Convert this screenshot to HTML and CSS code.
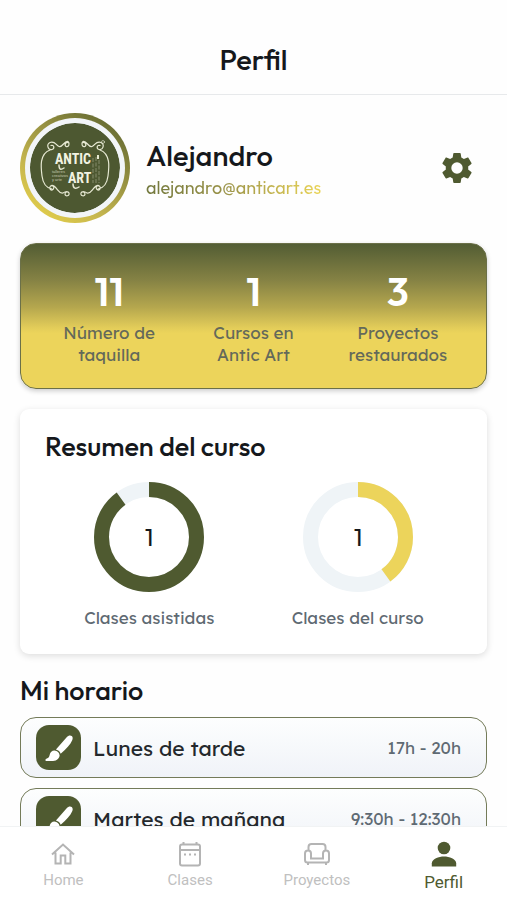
FILE: index.html
```html
<!DOCTYPE html>
<html lang="es">
<head>
<meta charset="utf-8">
<meta name="viewport" content="width=device-width, initial-scale=1">
<title>Perfil</title>
<link rel="stylesheet" href="styles.css">
</head>
<body>
<header class="topbar"><h1>Perfil</h1></header>
<main class="content">
  <section class="profile">
    <div class="avatar">
      <svg class="avatar-logo" viewBox="0 0 90 90" role="img" aria-label="Antic Art">
        <circle cx="45" cy="45" r="45" fill="#4d5831"/>
        <g fill="none" stroke="#e6e8d2" stroke-width="1.2" stroke-linecap="round">
          <path d="M39 20c-3-2-5 2-3 3.500 3 1 4-3 2-5-4-1-5 6-9 5-3-1-4-6-9-4-4 2-2 8 2 7 3-1 2-5-1-4M20 27C9 31 11 45 12 53c1 8 4 12 10 13M22 63c3-1 2 5-1 4-3-2 0-6 3-4 4 3 5 8 9 7 3-2 5-2 6 0 1 3-4 4-4 1 0-2 3-3 4-1"/>
          <path d="M52 20c3-2 5 2 3 3.500-3 1-4-3-2-5 4-1 5 6 9 5 3-1 4-6 9-4 4 2 2 8-2 7-3-1-2-5 1-4M70 27c11 4 9 18 8 26-1 8-4 12-10 13M68 63c-3-1-2 5 1 4 3-2 0-6-3-4-4 3-5 8-9 7-3-2-5-2-6 0-1 3 4 4 4 1 0-2-3-3-4-1"/>
          <circle cx="73" cy="19" r="1.500" stroke-width=".6"/>
          <path d="M29 42c0 5 2 5 5 3M43 61c0 5 3 5 6 3" stroke-width="1.500"/>
        </g>
        <g stroke="#9fa486" stroke-width=".7" fill="none" stroke-dasharray="4 1.500">
          <path d="M63 35v25M66 34v26M69 37v23"/>
        </g>
        <path d="M67 32h2v4h-2z" fill="#e6e8d2"/>
        <g class="logo-name"><text x="25" y="41">ANTIC</text><text x="38" y="60">ART</text></g>
        <g class="logo-note"><text x="22" y="50">talleres</text><text x="22" y="54">creativos</text><text x="22" y="58">y arte</text></g>
      </svg>
    </div>
    <div class="identity">
      <h2 class="name">Alejandro</h2>
      <span class="email">alejandro@anticart.es</span>
    </div>
    <button class="settings" type="button" aria-label="Ajustes">
      <svg viewBox="0 0 24 24"><path d="M19.430 12.980c.04-.32.07-.64.07-.98s-.03-.66-.07-.98l2.110-1.650c.19-.15.24-.42.12-.64l-2-3.460c-.12-.22-.39-.3-.61-.22l-2.490 1c-.52-.4-1.080-.73-1.690-.98l-.38-2.650C14.460 2.180 14.250 2 14 2h-4c-.25 0-.46.18-.49.42l-.38 2.650c-.61.25-1.170.59-1.690.98l-2.490-1c-.23-.09-.49 0-.61.22l-2 3.460c-.13.22-.07.49.12.64l2.110 1.650c-.04.32-.07.65-.07.98s.03.66.07.98l-2.110 1.650c-.19.15-.24.42-.12.64l2 3.460c.12.22.39.3.61.22l2.490-1c.52.4 1.080.73 1.690.98l.38 2.650c.03.24.24.42.49.42h4c.25 0 .46-.18.49-.42l.38-2.650c.61-.25 1.170-.59 1.690-.98l2.490 1c.23.09.49 0 .61-.22l2-3.460c.12-.22.07-.49-.12-.64zM12 15.800a3.800 3.800 0 1 1 0-7.600 3.800 3.800 0 0 1 0 7.600z"/></svg>
    </button>
  </section>

  <section class="stats">
    <div class="stat"><strong>11</strong><span>Número de<br>taquilla</span></div>
    <div class="stat"><strong>1</strong><span>Cursos en<br>Antic Art</span></div>
    <div class="stat"><strong>3</strong><span>Proyectos<br>restaurados</span></div>
  </section>

  <section class="summary">
    <h2>Resumen del curso</h2>
    <div class="charts">
      <figure class="chart">
        <svg viewBox="0 0 110 110">
          <circle class="track" cx="55" cy="55" r="47.500"/>
          <circle class="value attended" cx="55" cy="55" r="47.500" pathLength="100"/>
          <text x="55" y="64">1</text>
        </svg>
        <figcaption>Clases asistidas</figcaption>
      </figure>
      <figure class="chart">
        <svg viewBox="0 0 110 110">
          <circle class="track" cx="55" cy="55" r="47.500"/>
          <circle class="value course" cx="55" cy="55" r="47.500" pathLength="100"/>
          <text x="55" y="64">1</text>
        </svg>
        <figcaption>Clases del curso</figcaption>
      </figure>
    </div>
  </section>

  <section class="schedule">
    <h2>Mi horario</h2>
    <ul>
      <li>
        <span class="badge"><svg viewBox="0 0 44 44"><path d="M19.500 24 30 12c1.500-1.800 3.700-2.200 4.900-1.200s1.200 2.400.5 4.200c-1.600 4.200-5.900 8.600-11.300 13.200-.6-2-2.200-3.600-4.600-4.200zM18 25c3 .4 4.900 2.200 5.100 4.800-.6 4-4 5.600-8.300 5.500H10.500c-1.500 0-1.700-1.900-.4-2.400 2.500-.6 2.900-1.900 3.300-3.800.5-2.400 2.200-4 4.600-4.100z"/></svg></span>
        <span class="day">Lunes de tarde</span><time>17h - 20h</time>
      </li>
      <li>
        <span class="badge"><svg viewBox="0 0 44 44"><path d="M19.500 24 30 12c1.500-1.800 3.700-2.200 4.900-1.200s1.200 2.400.5 4.200c-1.600 4.200-5.900 8.600-11.300 13.200-.6-2-2.200-3.600-4.600-4.200zM18 25c3 .4 4.900 2.200 5.100 4.800-.6 4-4 5.600-8.300 5.500H10.500c-1.500 0-1.700-1.900-.4-2.400 2.500-.6 2.900-1.900 3.300-3.800.5-2.400 2.200-4 4.600-4.100z"/></svg></span>
        <span class="day">Martes de mañana</span><time>9:30h - 12:30h</time>
      </li>
    </ul>
  </section>
</main>
<nav class="tabs">
  <a href="#home"><svg viewBox="0 0 28 28"><path d="M3 14.500 14 4.500l11 10M6.500 12.500v11h5.200v-8h4.600v8h5.200v-11"/></svg><span>Home</span></a>
  <a href="#clases"><svg viewBox="0 0 28 28"><rect x="4" y="4.500" width="20" height="21" rx="2"/><path d="M4 10h20M7.500 2v3M20.500 2v3"/><path d="M8 14.500h2M13 14.500h2M18 14.500h2"/></svg><span>Clases</span></a>
  <a href="#proyectos"><svg viewBox="0 0 28 28"><path d="M5.500 11V7q0-3 3-3h11q3 0 3 3v4M8 18.500h12v-5q0-3 3-3t3 3v6.500q0 2.500-2.500 2.500h-19Q2 22.500 2 20v-6.500q0-3 3-3t3 3zM5 23v2M23 23v2"/></svg><span>Proyectos</span></a>
  <a class="active" href="#perfil" aria-current="page"><svg viewBox="0 0 28 28"><circle cx="14" cy="8" r="6.300"/><path d="M1.800 26.500v-3.300c0-4.200 7-6.700 12.200-6.700s12.200 2.500 12.200 6.700v3.300z"/></svg><span>Perfil</span></a>
</nav>
</body>
</html>
```
FILE: styles.css
```css
:root {
  --olive: #4f5a30;
  --yellow: #ecd45b;
  --ink: #15181c;
  --muted: #5f6a73;
  --display: Outfit, Lato, sans-serif;
  --text: Lexend, "Noto Sans", sans-serif;
}
* { box-sizing: border-box; }
body {
  margin: 0;
  height: 100vh;
  display: flex;
  flex-direction: column;
  background: #fefefe;
  color: var(--ink);
  font-family: var(--text);
}
h1, h2, ul, figure { margin: 0; padding: 0; }
h1, h2 {
  font-family: var(--display);
  font-size: 27px;
  line-height: 32px;
  font-weight: 500;
}
.topbar {
  flex: none;
  padding: 44px 20px 18px;
  border-bottom: 1px solid #e7e9eb;
  text-align: center;
}
.topbar h1 { font-size: 29px; }
.content {
  flex: 1;
  min-height: 0;
  overflow-y: auto;
  scrollbar-width: none;
  padding: 18px 20px;
}
.profile { display: flex; align-items: center; gap: 16px; }
.avatar {
  flex: none;
  width: 110px;
  height: 110px;
  padding: 5px;
  border-radius: 50%;
  background: linear-gradient(35deg, #efd84a 0%, #c3b44e 35%, #6d7135 85%);
}
.avatar-logo {
  display: block;
  width: 100%;
  height: 100%;
  padding: 5px;
  border-radius: 50%;
  background: #f2f5f8;
}
.logo-name { font: bold 14px "Liberation Sans Narrow", "Roboto Condensed", "DejaVu Sans Condensed", sans-serif; fill: #f2f3e2; }
.logo-note { font: 4px "Liberation Sans", sans-serif; fill: #c5c9b0; }
.identity { flex: 1; min-width: 0; padding-top: 4px; }
.name { font-size: 29px; }
.email {
  display: inline-block;
  margin-top: 4px;
  font-family: var(--display);
  font-size: 18px;
  line-height: 24px;
  color: transparent;
  background: linear-gradient(90deg, #72783d, #9a9349 45%, #ead457);
  background-clip: text;
  -webkit-background-clip: text;
}
.settings {
  width: 36px;
  height: 36px;
  margin-right: 12px;
  padding: 0;
  border: 0;
  background: none;
}
.settings svg { display: block; fill: var(--olive); }
.stats {
  display: grid;
  grid-template-columns: repeat(3, 1fr);
  margin-top: 20px;
  padding: 23px 16px 22px;
  border: 1px solid #6b7048;
  border-radius: 16px;
  background: linear-gradient(#535d34 0%, #858244 25%, #b5a74e 44%, #e2cc59 58%, #ecd45b 62%);
  box-shadow: 0 2px 5px #0003;
  text-align: center;
}
.stat strong {
  display: block;
  color: #fff;
  font-family: var(--display);
  font-size: 40px;
  font-weight: 600;
  line-height: 48px;
  margin-bottom: 7px;
}
.stat span { display: block; color: #64695a; font-size: 17px; line-height: 22px; }
.summary {
  margin-top: 20px;
  padding: 21px 25px 24px;
  border-radius: 9px;
  background: #fff;
  box-shadow: 0 2px 7px #0002;
}
.charts { display: grid; grid-template-columns: 1fr 1fr; margin-top: 20px; }
.chart { text-align: center; }
.chart svg { display: block; width: 110px; height: 110px; margin: 0 auto; }
.chart circle { fill: none; stroke-width: 15; }
.track { stroke: #eff4f7; }
.value { transform: rotate(-90deg); transform-origin: center; }
.attended { stroke: var(--olive); stroke-dasharray: 90 10; }
.course { stroke: var(--yellow); stroke-dasharray: 40 60; }
.chart text { font-family: var(--display); font-size: 25px; text-anchor: middle; fill: var(--ink); }
figcaption { margin-top: 14px; color: var(--muted); font-size: 17px; line-height: 24px; }
.schedule { margin-top: 20px; }
.schedule ul { display: grid; gap: 10px; margin-top: 11px; list-style: none; }
.schedule li {
  display: flex;
  align-items: center;
  gap: 12px;
  padding: 7px 25px 7px 15px;
  border: 1px solid #747b59;
  border-radius: 16px;
  background: linear-gradient(#fdfefe, #f0f3f8);
}
.badge { flex: none; width: 45px; height: 45px; border-radius: 13px; background: var(--olive); }
.badge svg { display: block; fill: #fff; }
.day { flex: 1; color: #24282c; font-size: 21px; line-height: 28px; }
time { color: var(--muted); font-size: 17px; line-height: 24px; }
.tabs {
  flex: none;
  display: grid;
  grid-template-columns: repeat(4, 1fr);
  min-height: 74px;
  padding-top: 13px;
  border-top: 1px solid #f1f3f4;
  background: #fff;
}
.tabs a {
  display: flex;
  flex-direction: column;
  align-items: center;
  color: #c0c0c0;
  font: 15px/24px Roboto, sans-serif;
  text-decoration: none;
}
.tabs svg { width: 28px; height: 28px; fill: none; stroke: #b4b4b4; stroke-width: 2; }
.tabs .active { color: var(--olive); font-size: 17px; line-height: 28px; }
.tabs .active svg { fill: var(--olive); stroke: none; }
```
